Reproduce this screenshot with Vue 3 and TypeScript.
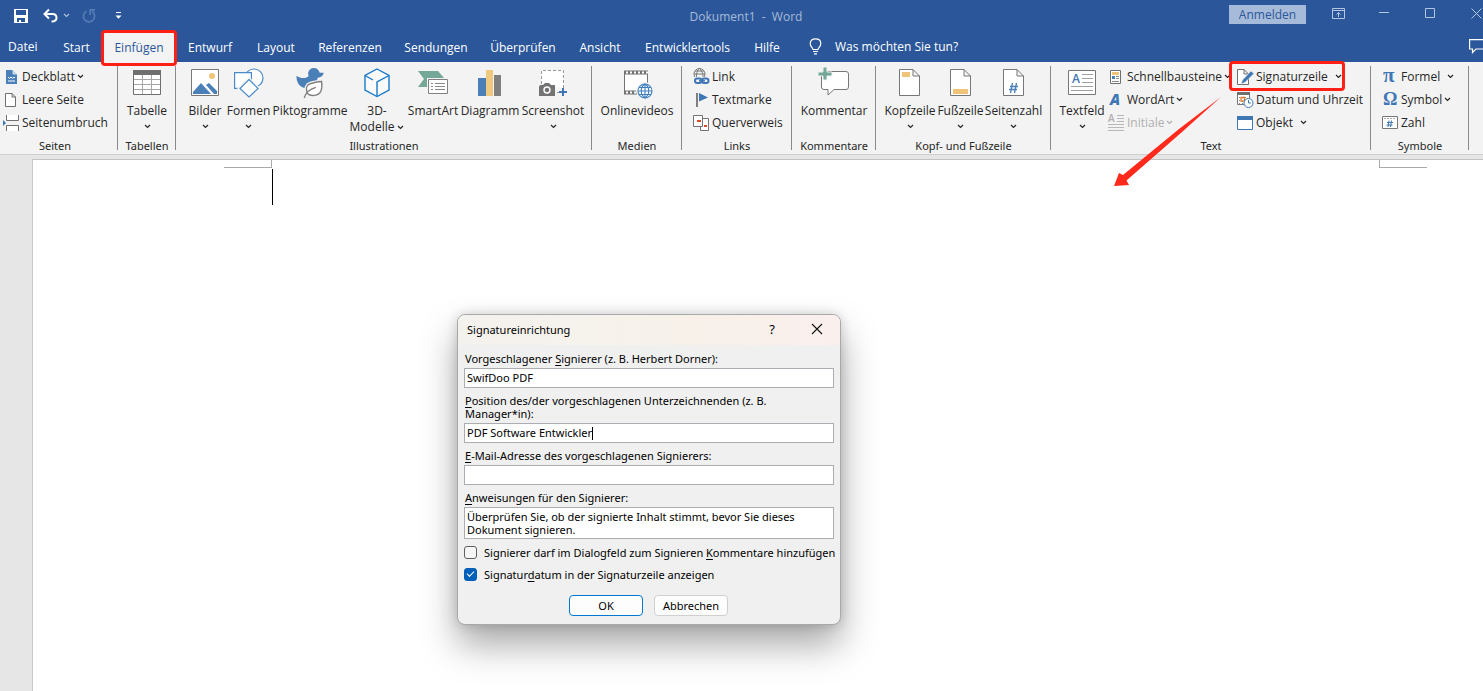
<script setup lang="ts">
import { h, ref } from 'vue'

interface Tab {
  label: string
  active?: boolean
}

const tabs: Tab[] = [
  { label: 'Datei' },
  { label: 'Start' },
  { label: 'Einfügen', active: true },
  { label: 'Entwurf' },
  { label: 'Layout' },
  { label: 'Referenzen' },
  { label: 'Sendungen' },
  { label: 'Überprüfen' },
  { label: 'Ansicht' },
  { label: 'Entwicklertools' },
  { label: 'Hilfe' },
]

const Chevron = () =>
  h('svg', { class: 'chevron', width: 7, height: 5, viewBox: '0 0 7 5', 'aria-hidden': 'true' }, [
    h('path', { d: 'M1 1l2.5 2.5L6 1', fill: 'none', stroke: 'currentColor', 'stroke-width': 1.2 }),
  ])

const signer = ref('SwifDoo PDF')
const position = ref('PDF Software Entwickler')
const email = ref('')
const instructions = ref('Überprüfen Sie, ob der signierte Inhalt stimmt, bevor Sie dieses Dokument signieren.')
const allowComments = ref(false)
const showDate = ref(true)
</script>

<template>
  <div class="app">
    <header class="titlebar">
      <div class="quick">
        <button class="bare" aria-label="Speichern">
          <svg width="14" height="14" viewBox="0 0 14 14"><path d="M0 0H14V14H0Z" fill="#fff" /><path d="M2 1H12V6H2ZM3 9H11V13H7V11H5V13H3Z" fill="#2b579a" /></svg>
        </button>
        <button class="bare undo" aria-label="Rückgängig">
          <svg width="15" height="14" viewBox="0 0 15 14" fill="none" stroke="#fff" stroke-width="2"><path d="M6 0.5L1.5 5L6 9.5M2 5H9.5C12 5 13.5 6.5 13.5 8.7C13.5 11 12 12.5 8.5 12.5" /></svg>
        </button>
        <button class="bare more" aria-label="Mehr"><Chevron /></button>
        <button class="bare redo" aria-label="Wiederholen">
          <svg width="14" height="14" viewBox="0 0 14 14" fill="none" stroke="#5379b4" stroke-width="1.8"><path d="M4.5 2.2A5.6 5.6 0 1 0 10.2 2.6M8.2 6V1H13" /></svg>
        </button>
        <button class="bare custom" aria-label="Symbolleiste anpassen">
          <svg width="7" height="8" viewBox="0 0 7 8" fill="#fff"><path d="M1 0H6V1H1ZM0.5 3.5H6.5L3.5 6.8Z" /></svg>
        </button>
      </div>
      <div class="doc-title">Dokument1&nbsp; -&nbsp; Word</div>
      <div class="window-tools">
        <button class="signin">Anmelden</button>
        <button class="bare" aria-label="Menüband anzeigen">
          <svg width="13" height="11" viewBox="0 0 13 11" fill="none" stroke="#b4c5df"><path d="M.5 .5H12.5V10.5H.5ZM.5 2.5H12.5M6.5 9V4.5M4.5 6.5L6.5 4.5L8.5 6.5" /></svg>
        </button>
        <button class="bare" aria-label="Minimieren">
          <svg width="11" height="11" viewBox="0 0 11 11" stroke="#b4c5df"><path d="M0 4.5H10" /></svg>
        </button>
        <button class="bare" aria-label="Maximieren">
          <svg width="11" height="11" viewBox="0 0 11 11" fill="none" stroke="#b4c5df"><path d="M.5 .5H9.5V9.5H.5Z" /></svg>
        </button>
        <button class="bare" aria-label="Schließen">
          <svg width="11" height="11" viewBox="0 0 11 11" stroke="#b4c5df"><path d="M.5 .5L10.5 10.5M10.5 .5L.5 10.5" /></svg>
        </button>
      </div>
    </header>

    <nav class="tabbar">
      <div class="tabs">
        <button v-for="tab in tabs" :key="tab.label" class="tab" :class="{ active: tab.active }">{{ tab.label }}</button>
      </div>
      <button class="tell-me">
        <svg width="13" height="17" viewBox="0 0 13 17" fill="none" stroke="#fff" stroke-width="1.2"><path d="M4 11.5C4 9.5 1.2 8.8 1.2 5.5C1.2 2.6 3.5 .8 6.5 .8S11.800 2.600 11.800 5.500C11.800 8.800 9 9.500 9 11.500ZM4 13.500H9M5 15.800H8" /></svg>
        Was möchten Sie tun?
      </button>
      <button class="bare comments" aria-label="Kommentare">
        <svg width="14" height="15" viewBox="0 0 14 15" fill="none" stroke="#fff" stroke-width="1.2"><path d="M14 .6H.6V10H3.500V13.500L7 10H14" /></svg>
      </button>
    </nav>

    <section class="ribbon">
      <div class="group pages">
        <div class="body">
          <div class="stack">
            <button class="small">
              <svg width="18" height="18" viewBox="0 0 18 18"><path d="M3 2H10L14 6V16H3Z" fill="#4a7fb8" /><path d="M10 2V6H14Z" fill="#a9c4e0" stroke="#f3f3f3" stroke-width=".8" /><path d="M5 9l1.500 1.500L8 9l1.500 1.500L11 9l1 1M5 13H12" fill="none" stroke="#fff" /></svg>
              Deckblatt <Chevron />
            </button>
            <button class="small">
              <svg width="18" height="18" viewBox="0 0 18 18" fill="#fff" stroke="#6f6f6f"><path d="M2.500 2.500H9L12.500 6V15.500H2.500ZM9 2.500V6H12.500" /></svg>
              Leere Seite
            </button>
            <button class="small">
              <svg width="18" height="18" viewBox="0 0 18 18" fill="#fff" stroke="#6f6f6f"><path d="M3.500 1V6.500H15.500V1M3.500 17V11.500H15.500V17" /><path d="M0 6L3 9L0 12Z" fill="#3b76b8" stroke="none" /></svg>
              Seitenumbruch
            </button>
          </div>
        </div>
        <div class="caption">Seiten</div>
      </div>

      <div class="group tables">
        <div class="body">
          <button class="large">
            <svg width="30" height="28" viewBox="0 0 30 28"><path d="M1.500 2.500H28.500V26.500H1.500Z" fill="#fff" stroke="#6f6f6f" /><path d="M1 2H29V7H1Z" fill="#6f6f6f" /><path d="M10.500 7V26M19.500 7V26M2 11.500H28M2 16.500H28M2 21.500H28" stroke="#a6a6a6" /></svg>
            <span>Tabelle</span><Chevron />
          </button>
        </div>
        <div class="caption">Tabellen</div>
      </div>

      <div class="group illustrations">
        <div class="body">
          <button class="large">
            <svg width="28" height="28" viewBox="0 0 28 28"><path d="M.5 1.500H27.500V27.500H.5Z" fill="#fff" stroke="#777" /><circle cx="21" cy="8" r="3" fill="#efc478" /><path d="M2 26V24L10 15L20 26ZM15 17L18 15L26 23V26H23Z" fill="#4a7fb8" /></svg>
            <span>Bilder</span><Chevron />
          </button>
          <button class="large">
            <svg width="30" height="30" viewBox="0 0 30 30" fill="#fff" stroke="#4a8ac7" stroke-width="1.200"><circle cx="20" cy="10" r="9" /><path d="M.6 4.600H17.400V20.400H.6Z" /><path d="M15 11.500L24 20.500L15 29L6 20.500Z" stroke="#f3f3f3" stroke-width="4" /><path d="M15 11.500L24 20.500L15 29L6 20.500Z" /></svg>
            <span>Formen</span><Chevron />
          </button>
          <button class="large">
            <svg width="29" height="31" viewBox="0 0 29 31"><path d="M0 8C4 11 9 11 12 9C13 8 12 6 12 5C13 2 15 0 18 0C21 0 23 2 24 5H28C28 8 25 10 22 10C21 14 18 20 10 21C3 20 0 15 0 8Z" fill="#4a7fb8" /><path d="M11 26C9 20 11 17 15 16C19 15 22 14 26 14C27 22 25 27 20 28C16 29 13 28 11 26Z" fill="#f3f3f3" stroke="#f3f3f3" stroke-width="4" /><path d="M11 26C9 20 11 17 15 16C19 15 22 14 26 14C27 22 25 27 20 28C16 29 13 28 11 26Z" fill="#fff" stroke="#808080" stroke-width="1.400" /><path d="M8 31C9 27 13 22 20 20" fill="none" stroke="#808080" stroke-width="1.400" /></svg>
            <span>Piktogramme</span>
          </button>
          <button class="large">
            <svg width="26" height="30" viewBox="0 0 26 30" fill="#fafafa" stroke="#1979ca" stroke-width="1.400"><path d="M13 1L25 7.500V22L13 28.500L1 22V7.500Z" /><path d="M1 7.500L9 12M25 7.500L13 14V28" fill="none" /></svg>
            <span>3D-</span><span class="line">Modelle <Chevron /></span>
          </button>
          <button class="large">
            <svg width="30" height="28" viewBox="0 0 30 28"><path d="M0 3H20L26 10L20 19H0L6 11Z" fill="#74a899" /><path d="M9 10H30V28H9Z" fill="#f3f3f3" /><path d="M10.500 11.500H29.500V25.500H10.500Z" fill="#fff" stroke="#808080" /><path d="M13 15.500H15M17 15.500H27M13 18.500H15M17 18.500H27M13 21.500H15M17 21.500H27" stroke="#888" /></svg>
            <span>SmartArt</span>
          </button>
          <button class="large">
            <svg width="24" height="28" viewBox="0 0 24 28"><path d="M0 10H8V28H0Z" fill="#4a7fb8" /><path d="M8 2H15V28H8Z" fill="#efc97f" /><path d="M16 7H23V28H16Z" fill="#808080" /></svg>
            <span>Diagramm</span>
          </button>
          <button class="large">
            <svg width="28" height="30" viewBox="0 0 28 30"><path d="M2.500 16V2.500H24.500V20M18 24.500H20" fill="#fff" stroke="#999" stroke-dasharray="3 2" /><path d="M0 19Q0 17 2 17H4L6 15H10L12 17H16V28H0Z" fill="#737373" /><circle cx="8" cy="22" r="3" fill="none" stroke="#fff" stroke-width="1.400" /><path d="M24 20V28M20 24H28" stroke="#3f77b5" stroke-width="2" /></svg>
            <span>Screenshot</span><Chevron />
          </button>
        </div>
        <div class="caption">Illustrationen</div>
      </div>

      <div class="group media">
        <div class="body">
          <button class="large">
            <svg width="26" height="30" viewBox="2 0 26 30"><path d="M2.500 3.500H25.500V25.500H2.500Z" fill="#fff" stroke="#737373" /><path d="M2 4.500H26M2 24.500H16" stroke="#737373" stroke-width="4" /><path d="M4 4.500H26M4 24.500H16" stroke="#fff" stroke-width="2" stroke-dasharray="2 2" /><circle cx="23" cy="23" r="9" fill="#f3f3f3" /><g fill="#fff" stroke="#3f7fc0" stroke-width="1.100"><circle cx="23" cy="23" r="7" /><path d="M23 16C18 19 18 27 23 30M23 16C28 19 28 27 23 30M23 16V30M16 23H30M17 19.500H29M17 26.500H29" fill="none" /></g></svg>
            <span>Onlinevideos</span>
          </button>
        </div>
        <div class="caption">Medien</div>
      </div>

      <div class="group links">
        <div class="body">
          <div class="stack">
            <button class="small">
              <svg width="18" height="18" viewBox="0 0 18 18" fill="none"><g stroke="#777"><circle cx="6.500" cy="6" r="5.500" /><path d="M6.500 .5C3 4 3 8 4 10M6.500 .5C10 4 10 7 10 9M1 6H12M2 3H11" /></g><path d="M1 9H17V17H1Z" fill="#f3f3f3" /><g stroke="#3f77b5" stroke-width="2"><rect x="2" y="10.500" width="6.500" height="4.500" rx="2.200" /><rect x="9" y="10.500" width="6.500" height="4.500" rx="2.200" /><path d="M6 12.800H12" stroke-width="1.500" /></g></svg>
              Link
            </button>
            <button class="small">
              <svg width="18" height="18" viewBox="0 0 18 18"><path d="M3 2H5V16H3Z" fill="#808080" /><path d="M6 2L15 6.500L6 10.500Z" fill="#3f77b5" /></svg>
              Textmarke
            </button>
            <button class="small">
              <svg width="18" height="18" viewBox="0 0 18 18" fill="#fff" stroke="#737373"><path d="M7.500 4.500H15.500V16.500H7.500Z" /><path d="M.5 1.500H9.500V12.500H.5Z" /><path d="M4 6H8V8H4ZM11 11H14V13H11Z" fill="#d84a27" stroke="none" /></svg>
              Querverweis
            </button>
          </div>
        </div>
        <div class="caption">Links</div>
      </div>

      <div class="group comment">
        <div class="body">
          <button class="large">
            <svg width="31" height="30" viewBox="0 0 31 30"><path d="M5.500 3.500H27Q29.500 3.500 29.500 6V19Q29.500 21.500 27 21.500H15L9 27V21.500H5Q2.500 21.500 2.500 19V6Q2.500 3.500 5 3.500Z" fill="#fff" stroke="#777" /><path d="M4 -1H8V4H13V8H8V12H4V8H-1V4H4Z" fill="#74a899" stroke="#f3f3f3" stroke-width="1" /></svg>
            <span>Kommentar</span>
          </button>
        </div>
        <div class="caption">Kommentare</div>
      </div>

      <div class="group headfoot">
        <div class="body">
          <button class="large">
            <svg width="22" height="28" viewBox="0 0 22 28"><path d="M.5 1.500H14L20.500 8V27.500H.5ZM14 1.500V8H20.500" fill="#fff" stroke="#777" /><path d="M3 4H11V9H3Z" fill="#efc478" /></svg>
            <span>Kopfzeile</span><Chevron />
          </button>
          <button class="large">
            <svg width="22" height="28" viewBox="0 0 22 28"><path d="M.5 1.500H14L20.500 8V27.500H.5ZM14 1.500V8H20.500" fill="#fff" stroke="#777" /><path d="M3 21H18V26H3Z" fill="#efc478" /></svg>
            <span>Fußzeile</span><Chevron />
          </button>
          <button class="large">
            <svg width="22" height="28" viewBox="0 0 22 28"><path d="M.5 1.500H14L20.500 8V27.500H.5ZM14 1.500V8H20.500" fill="#fff" stroke="#777" /><path d="M9.500 15L7.500 25M13.500 15L11.500 25M7 18.500H15M6 21.500H14" stroke="#4a7fb8" stroke-width="1.300" /></svg>
            <span>Seitenzahl</span><Chevron />
          </button>
        </div>
        <div class="caption">Kopf- und Fußzeile</div>
      </div>

      <div class="group text">
        <div class="body">
          <button class="large">
            <svg width="28" height="28" viewBox="0 0 28 28"><path d="M.5 2.500H27.500V26.500H.5Z" fill="#fff" stroke="#777" /><text class="glyph" x="4" y="15" font-size="12">A</text><path d="M14 6.500H25M14 10.500H25M14 14.500H25M3 18.500H25M3 22.500H25" stroke="#a0a0a0" /></svg>
            <span>Textfeld</span><Chevron />
          </button>
          <div class="stack first">
            <button class="small">
              <svg width="18" height="18" viewBox="0 0 18 18"><path d="M2.500 2.500H12.500V15.500H2.500Z" fill="#fff" stroke="#6f6f6f" /><path d="M4 4H11V7H4Z" fill="#efc478" /><path d="M4 8H7V11H4Z" fill="#4a7fb8" /><path d="M8 8.500H11M8 10.500H11M4 13.500H11" stroke="#888" /></svg>
              Schnellbausteine <Chevron />
            </button>
            <button class="small">
              <svg width="18" height="18" viewBox="0 0 18 18"><text class="glyph slanted" x="2" y="14" font-size="15">A</text></svg>
              WordArt <Chevron />
            </button>
            <button class="small" disabled>
              <svg width="18" height="18" viewBox="0 0 18 18" stroke="#b8b8b8"><text class="glyph muted" x="0" y="8" font-size="10">A</text><path d="M9 1.500H16M9 4.500H16M9 7.500H16M0 10.500H16M0 13.500H16M0 16.500H16" /></svg>
              Initiale <Chevron />
            </button>
          </div>
          <div class="stack second">
            <div class="marked">
              <button class="small">
                <svg width="18" height="18" viewBox="0 0 18 18"><path d="M.5 1.500H7L11.500 6V16.500H.5ZM7 1.500V6H11.500" fill="#fff" stroke="#6f6f6f" /><path d="M14 3L17 5.500L8 14.500L4 16L5.500 12Z" fill="#3f77b5" stroke="#f3f3f3" stroke-width=".6" /></svg>
                Signaturzeile <Chevron class="wide" />
              </button>
              <svg class="arrow" width="108" height="92" viewBox="0 0 108 92" fill="#ff2a1b"><path d="M107 1L65 33L9 79L5 77L0 90L15 89L12.500 84.500L68 36Z" /></svg>
            </div>
            <button class="small">
              <svg width="18" height="18" viewBox="0 0 18 18"><path d="M.5 1.500H12.500V13.500H.5Z" fill="#fff" stroke="#777" /><path d="M0 1H13V4H0Z" fill="#6f6f6f" /><path d="M2 6.500H11M2 9.500H11M2 12.500H8" stroke="#888" stroke-dasharray="1 2" /><path d="M4 6.500H7.500V10H4Z" fill="#fff" stroke="#e07a30" stroke-width="1.300" /><circle cx="11.500" cy="12" r="4.500" fill="#fff" stroke="#3f77b5" /><path d="M11.500 9V12H14" fill="none" stroke="#3f77b5" /></svg>
              Datum und Uhrzeit
            </button>
            <button class="small">
              <svg width="18" height="18" viewBox="0 0 18 18"><path d="M.5 2.500H15.500V15.500H.5Z" fill="#fff" stroke="#3f77b5" /><path d="M0 2H16V6H0Z" fill="#3f77b5" /></svg>
              Objekt <Chevron class="wide" />
            </button>
          </div>
        </div>
        <div class="caption">Text</div>
      </div>

      <div class="group symbols">
        <div class="body">
          <div class="stack">
            <button class="small">
              <svg width="18" height="18" viewBox="0 0 18 18"><text class="glyph serif" x="1" y="14" font-size="21">π</text></svg>
              Formel <Chevron class="wide" />
            </button>
            <button class="small">
              <svg width="18" height="18" viewBox="0 0 18 18"><text class="glyph serif" x="1" y="14" font-size="18">Ω</text></svg>
              Symbol <Chevron />
            </button>
            <button class="small">
              <svg width="18" height="18" viewBox="0 0 18 18" fill="none"><path d="M.5 2.500H15.500V14.500H.5Z" fill="#fff" stroke="#777" /><path d="M2 4.500H14" stroke="#aaa" stroke-dasharray="2 1" /><path d="M7 6.500L6 13M9.500 6.500L8.500 13M5 8.500H11M4.500 11H10.500" stroke="#3f77b5" /></svg>
              Zahl
            </button>
          </div>
        </div>
        <div class="caption">Symbole</div>
      </div>
    </section>

    <main class="workspace">
      <div class="page">
        <div class="margins"><i class="corner left"></i><i class="corner right"></i></div>
        <div class="cursor"></div>

        <form class="dialog" role="dialog" aria-labelledby="dialog-title" @submit.prevent>
          <div class="dialog-head">
            <span id="dialog-title">Signatureinrichtung</span>
            <button type="button" class="bare help" aria-label="Hilfe">?</button>
            <button type="button" class="bare close" aria-label="Schließen">
              <svg width="12" height="12" viewBox="0 0 12 12" stroke="#111" stroke-width="1.100"><path d="M1 1L11 11M11 1L1 11" /></svg>
            </button>
          </div>
          <div class="dialog-body">
            <label for="signer">Vorgeschlagener <u>S</u>ignierer (z. B. Herbert Dorner):</label>
            <input id="signer" v-model="signer" type="text" />
            <label for="position"><u>P</u>osition des/der vorgeschlagenen Unterzeichnenden (z. B. Manager*in):</label>
            <div class="focused">
              <input id="position" v-model="position" type="text" />
              <span class="caret"></span>
            </div>
            <label for="email"><u>E</u>-Mail-Adresse des vorgeschlagenen Signierers:</label>
            <input id="email" v-model="email" type="text" />
            <label for="instructions"><u>A</u>nweisungen für den Signierer:</label>
            <textarea id="instructions" v-model="instructions"></textarea>
            <div class="check">
              <input id="allow" v-model="allowComments" type="checkbox" />
              <label for="allow">Signierer darf im Dialogfeld zum Signieren <u>K</u>ommentare hinzufügen</label>
            </div>
            <div class="check">
              <input id="date" v-model="showDate" type="checkbox" />
              <label for="date">Signatur<u>d</u>atum in der Signaturzeile anzeigen</label>
            </div>
            <div class="actions">
              <button type="submit" class="primary">OK</button>
              <button type="button">Abbrechen</button>
            </div>
          </div>
        </form>
      </div>
    </main>
  </div>
</template>

<style>
body {
  margin: 0;
  overflow: hidden;
}
</style>

<style scoped>
.app {
  display: flex;
  flex-direction: column;
  min-height: 100vh;
  overflow: hidden;
  background: #e6e6e6;
  color: #262626;
  font: 12px/16px "Open Sans", "Noto Sans", sans-serif;
}
.app *,
.app *::before,
.app *::after {
  box-sizing: border-box;
}
button,
input,
textarea {
  margin: 0;
  padding: 0;
  border: 0;
  background: none;
  color: inherit;
  font: inherit;
}
svg {
  display: block;
  flex: none;
  overflow: visible;
}
.bare {
  display: flex;
  align-items: center;
  justify-content: center;
}
.glyph {
  fill: #3f77b5;
  stroke: none;
  font-family: "Open Sans", sans-serif;
  font-weight: 600;
}
.glyph.slanted {
  font-style: italic;
  font-weight: 800;
}
.glyph.muted {
  fill: #b0b0b0;
}
.glyph.serif {
  font-family: "Liberation Serif", serif;
  font-weight: 700;
}

/* Title bar */
.titlebar {
  display: grid;
  grid-template-columns: 1fr auto 1fr;
  height: 31px;
  padding-left: 9px;
  background: #2b579a;
  color: #fff;
}
.quick {
  display: flex;
  align-items: center;
  padding-left: 5px;
}
.undo {
  margin-left: 15px;
}
.more {
  margin-left: 5px;
  color: #a8bcd9;
}
.redo {
  margin-left: 12px;
}
.custom {
  margin-left: 19px;
}
.doc-title {
  padding-top: 9px;
  color: #a6b9d8;
}
.window-tools {
  display: flex;
  align-items: flex-start;
  justify-content: flex-end;
}
.window-tools .bare {
  width: 46px;
  height: 11px;
  margin-top: 8px;
}
.window-tools .bare:last-child {
  width: 12px;
  margin-left: 18px;
  justify-content: flex-start;
}
.signin {
  width: 77px;
  height: 19px;
  margin: 5px 9px 0 0;
  background: #a6bbd9;
  color: #2b579a;
  line-height: 20px;
}

/* Tabs */
.tabbar {
  display: flex;
  align-items: center;
  height: 31px;
  background: #2b579a;
  color: #fff;
}
.tabs {
  display: grid;
  grid-template-columns: 51px 51px 74px 68px 64px 84px 88px 86px 68px 107px 52px;
  flex: none;
  height: 100%;
}
.tab {
  position: relative;
  padding-top: 2px;
  white-space: nowrap;
  text-align: center;
}
.tab:first-child {
  padding: 0 0 0 8px;
  text-align: left;
}
.tab.active {
  background: #f3f3f3;
  color: #2b579a;
}
.tab.active::after {
  content: "";
  position: absolute;
  inset: -1px -1px -4px -1px;
  z-index: 2;
  border: 3px solid #ff2015;
  border-radius: 4px;
}
.tell-me {
  display: flex;
  align-items: center;
  gap: 13px;
  margin-left: 16px;
  white-space: nowrap;
}
.comments {
  margin-left: auto;
}

/* Ribbon */
.ribbon {
  display: flex;
  height: 93px;
  border-bottom: 1px solid #cfcfcf;
  background: #f3f3f3;
}
.group {
  position: relative;
  display: flex;
  flex: none;
  flex-direction: column;
}
.group::after {
  content: "";
  position: absolute;
  top: 4px;
  right: 0;
  bottom: 4px;
  width: 1px;
  background: #8a8a8a;
}
.body {
  display: grid;
  height: 76px;
}
.caption {
  text-align: center;
  font-family: "Noto Sans", "Open Sans", sans-serif;
  font-size: 11px;
}
.pages { width: 118px; }
.tables { width: 58px; }
.illustrations { width: 416px; }
.media { width: 90px; }
.links { width: 110px; }
.comment { width: 84px; }
.headfoot { width: 175px; }
.text { width: 320px; }
.symbols { width: 98px; }
.pages .body { padding-left: 3px; }
.pages .caption { padding-right: 8px; }
.illustrations .body {
  grid-template-columns: 44px 43px 80px 54px 58px 56px 70px;
  padding-left: 7px;
}
.links .body { padding-left: 11px; }
.headfoot .body {
  grid-template-columns: 52px 49px 57px;
  padding-left: 8px;
}
.text .body {
  grid-template-columns: 52px 129px 130px;
  padding-left: 5px;
}
.symbols .body { padding-left: 11px; }
.stack {
  display: flex;
  flex-direction: column;
  padding-top: 3px;
}
.small {
  display: flex;
  align-items: center;
  height: 23px;
  gap: 1px;
  white-space: nowrap;
}
.small .chevron {
  margin-left: 1px;
}
.small .chevron.wide {
  margin-left: 6px;
}
.small:disabled {
  color: #b0b0b0;
}
.large {
  display: flex;
  flex-direction: column;
  align-items: center;
  padding-top: 6px;
  white-space: nowrap;
}
.large > svg:first-child {
  height: 30px;
  margin-bottom: 5px;
}
.large > svg[height="28"]:first-child {
  height: 28px;
  margin-bottom: 7px;
}
.large > .chevron {
  margin-top: 5px;
}
.line {
  display: flex;
  align-items: center;
  gap: 3px;
}
.marked {
  position: relative;
}
.marked::after {
  content: "";
  position: absolute;
  top: -4px;
  left: -8px;
  width: 116px;
  height: 30px;
  border: 3px solid #ff2015;
  border-radius: 4px;
  pointer-events: none;
}
.arrow {
  position: absolute;
  top: 31px;
  left: -123px;
  z-index: 3;
}

/* Document */
.workspace {
  display: flex;
  flex: 1;
  padding: 4px 0 0 32px;
}
.page {
  position: relative;
  flex: 1;
  border-top: 1px solid #c3c3c3;
  border-left: 1px solid #c8c8c8;
  background: #fff;
}
.margins {
  display: flex;
  justify-content: space-between;
  padding: 0 56px 0 191px;
}
.corner {
  width: 48px;
  height: 8px;
  border-bottom: 1px solid #aaa;
}
.corner.left {
  border-right: 1px solid #aaa;
}
.corner.right {
  border-left: 1px solid #aaa;
}
.cursor {
  width: 1px;
  height: 36px;
  margin: 1px 0 0 239px;
  background: #000;
}

/* Dialog */
.dialog {
  position: absolute;
  top: 154px;
  left: 424px;
  width: 384px;
  border: 1px solid #a9a9a9;
  border-radius: 8px;
  background: #f0f0f0;
  box-shadow: 0 20px 36px rgba(0, 0, 0, 0.34), 0 0 12px rgba(0, 0, 0, 0.16);
  color: #000;
  font: 11px/13px "Noto Sans", "Open Sans", sans-serif;
}
.dialog-head {
  display: flex;
  align-items: center;
  height: 30px;
  padding: 0 17px 2px 9px;
  border-radius: 7px 7px 0 0;
  background: linear-gradient(90deg, #f4f2ee, #f7f1ea 60%, #faefed);
}
.help {
  margin-left: auto;
  font-size: 13px;
}
.close {
  margin-left: 36px;
}
.dialog-body {
  display: flex;
  flex-direction: column;
  padding: 7px 6px 8px;
}
.dialog-body > label {
  max-width: 340px;
  margin: 0 0 3px 1px;
}
u {
  text-underline-offset: 2px;
}
input[type="text"],
textarea {
  width: 100%;
  height: 20px;
  margin-bottom: 6px;
  padding: 0 2px 2px;
  border: 1px solid #abadb3;
  background: #fff;
}
.focused {
  position: relative;
  display: flex;
}
.caret {
  position: absolute;
  top: 4px;
  left: 128px;
  width: 1px;
  height: 13px;
  background: #000;
}
textarea {
  display: block;
  height: 32px;
  margin-bottom: 7px;
  padding: 2px 20px 0 2px;
  overflow: hidden;
  resize: none;
}
.check {
  display: flex;
  align-items: center;
  gap: 7px;
  height: 13px;
  margin-bottom: 9px;
  white-space: nowrap;
}
input[type="checkbox"] {
  position: relative;
  flex: none;
  width: 13px;
  height: 13px;
  border: 1px solid #5f5f5f;
  border-radius: 3px;
  background: #f6f6f6;
  appearance: none;
}
input[type="checkbox"]:checked {
  border-color: #005fb8;
  background: #005fb8;
}
input[type="checkbox"]:checked::after {
  content: "";
  position: absolute;
  top: 2px;
  left: 2px;
  width: 7px;
  height: 4px;
  border: solid #fff;
  border-width: 0 0 1px 1px;
  transform: rotate(-45deg);
}
.actions {
  display: flex;
  gap: 11px;
  margin: 5px 0 0 105px;
}
.actions button {
  width: 74px;
  height: 21px;
  border: 1px solid #d0d0d0;
  border-radius: 4px;
  background: #fdfdfd;
}
.actions .primary {
  border-color: #0078d4;
}
</style>
